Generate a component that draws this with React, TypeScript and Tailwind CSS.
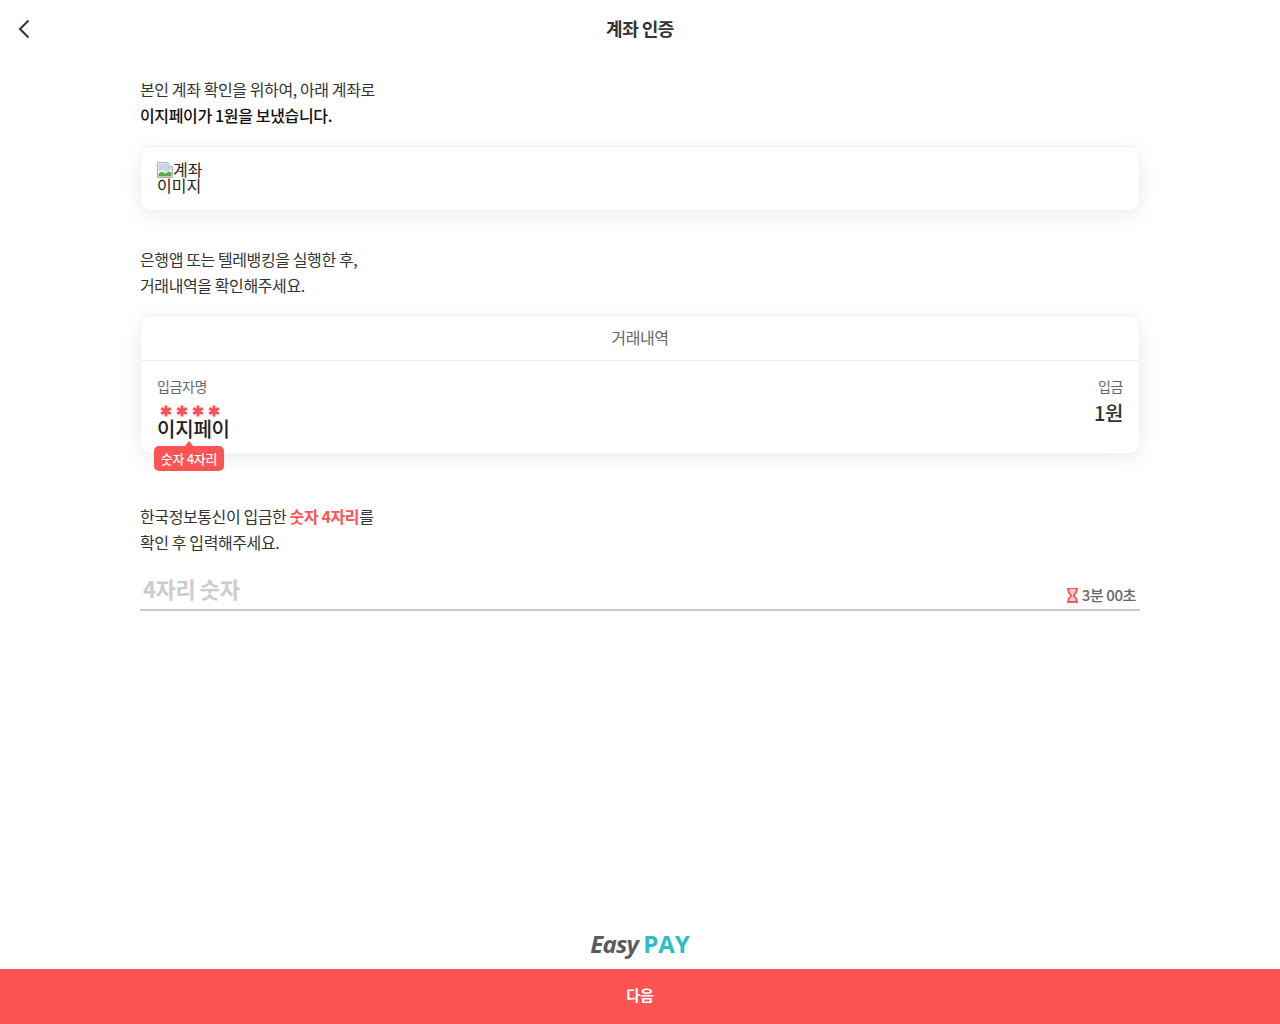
import React from "react";

const font = { fontFamily: '"Noto Sans CJK KR", "Noto Sans", sans-serif' };

function BrokenImage() {
  return (
    <svg width="16" height="16" viewBox="0 0 16 16" className="inline-block align-[-2px]">
      <path d="M0.5 0.5H11L15.5 5V15.5H0.5Z" fill="#fff" stroke="#b0b0b0" />
      <path d="M1.5 1.5H10.5V5.5H14.5V8L9 10L5 8L1.5 10Z" fill="#c5d5ee" />
      <path d="M1.5 14.5V11.5L5 9.5L8 11.5L12 9.5L14.5 10.5V14.5Z" fill="#5fa84a" />
      <path d="M11 0.5V5H15.5" fill="#eee" stroke="#b0b0b0" />
    </svg>
  );
}

function Hourglass() {
  return (
    <svg width="13" height="15" viewBox="0 0 13 15" fill="none" stroke="#ee5a5a" strokeWidth="1.8">
      <path d="M1 1H12M1 14H12" />
      <path d="M2.5 1V3.4C2.5 5.3 5.2 6.2 5.2 7.5C5.2 8.8 2.5 9.7 2.5 11.6V14H10.5V11.6C10.5 9.7 7.8 8.8 7.8 7.5C7.8 6.2 10.5 5.3 10.5 3.4V1" fill="#f9c9c9" />
    </svg>
  );
}

export default function App() {
  return (
    <div style={font} className="flex h-[1024px] w-full flex-col bg-white text-[#333]">
      <header className="relative flex h-[58px] shrink-0 items-center justify-center">
        <button className="absolute left-[12px] top-[17px] flex h-6 w-6 items-center justify-center">
          <svg width="24" height="24" viewBox="0 0 24 24" fill="none" stroke="#333" strokeWidth="2">
            <path d="M16.5 3.5L8 12L16.5 20.5" />
          </svg>
        </button>
        <h1 className="mt-[-2px] text-[18px] font-bold leading-[26px] tracking-[-0.5px] text-[#333]">계좌 인증</h1>
      </header>

      <main className="mx-auto flex w-[1000px] flex-1 flex-col pt-[18px]">
        <p className="text-[16px] leading-[26px] tracking-[-0.4px]">
          본인 계좌 확인을 위하여, 아래 계좌로
          <br />
          <strong className="font-medium tracking-[-0.35px] text-[#111]">이지페이가 1원을 보냈습니다.</strong>
        </p>

        <div className="mt-[18px] rounded-[10px] border border-[#f2f2f2] bg-white py-[15px] pb-[16px] pl-[16px] shadow-[0_4px_20px_rgba(0,0,0,0.08)]">
          <div className="h-[32px] w-[48px] text-[16px] leading-[15px] text-[#222]">
            <BrokenImage />
            계좌 이미지
          </div>
        </div>

        <p className="mt-[35px] text-[16px] leading-[26px] tracking-[-0.4px]">
          은행앱 또는 텔레뱅킹을 실행한 후,
          <br />
          거래내역을 확인해주세요.
        </p>

        <section className="mt-[17px] rounded-[10px] border border-[#f2f2f2] bg-white shadow-[0_4px_20px_rgba(0,0,0,0.08)]">
          <div className="flex h-[45px] items-center justify-center border-b border-[#eeeeee] pb-[3px] text-[16px] tracking-[-0.4px] text-[#666]">
            거래내역
          </div>
          <div className="relative flex h-[92px] justify-between px-[16px] pt-[15px]">
            <div>
              <div className="text-[14px] leading-[20px] tracking-[-0.4px] text-[#666]">입금자명</div>
              <div className="ml-[3px] mt-[9px] flex h-[11px] gap-[4px] text-[#fc5453]">
                {[0, 1, 2, 3].map((i) => (
                  <svg key={i} width="12" height="12" viewBox="0 0 12 12" stroke="#fc5453" strokeWidth="3">
                    <path d="M6 0.5V11.5M1.2 3.2L10.8 8.8M10.8 3.2L1.2 8.8" />
                  </svg>
                ))}
              </div>
              <div className="text-[20px] font-medium leading-[26px] tracking-[-0.2px] text-[#222]">이지페이</div>
            </div>
            <div className="text-right">
              <div className="text-[14px] leading-[20px] tracking-[-0.4px] text-[#666]">입금</div>
              <div className="mt-[2px] text-[20px] font-medium leading-[30px] tracking-[-0.4px] text-[#333]">1원</div>
            </div>
            <div className="absolute left-[13px] top-[85px] flex h-[25px] w-[70px] items-center justify-center rounded-[5px] bg-[#fc5453] text-[13px] font-medium tracking-[-0.3px] text-white">
              <span className="absolute left-[30px] top-[-5px] h-0 w-0 border-x-[5px] border-b-[6px] border-x-transparent border-b-[#fc5453]" />
              숫자 4자리
            </div>
          </div>
        </section>

        <p className="mt-[49px] text-[16px] leading-[26px] tracking-[-0.4px]">
          한국정보통신이 입금한 <strong className="font-bold text-[#fc5453]">숫자 4자리</strong>를
          <br />
          확인 후 입력해주세요.
        </p>

        <div className="mt-[8px] flex h-[48px] items-center justify-between border-b-2 border-[#cccccc] pl-[3px] pr-[4px]">
          <span className="mt-[5px] text-[22px] font-bold tracking-[-0.4px] text-[#cccccc]">4자리 숫자</span>
          <span className="mt-[18px] flex items-center gap-[3px] text-[15px] font-medium tracking-[-0.4px] text-[#666]">
            <Hourglass />
            3분 00초
          </span>
        </div>
      </main>

      <div className="flex h-[44px] shrink-0 items-start justify-center">
        <div className="mt-[1px] flex items-baseline gap-[5px] text-[24px] leading-[36px]" style={{ fontFamily: '"Open Sans", sans-serif' }}>
          <span className="font-bold italic tracking-[-0.8px] text-[#5a5a5f]">Easy</span>
          <span className="font-bold tracking-[0px] text-[#2dbdc9]">PAY</span>
        </div>
      </div>

      <button className="flex h-[55px] shrink-0 items-center justify-center bg-[#fc5453] pb-[2px] text-[15px] font-bold text-white">
        다음
      </button>
    </div>
  );
}
